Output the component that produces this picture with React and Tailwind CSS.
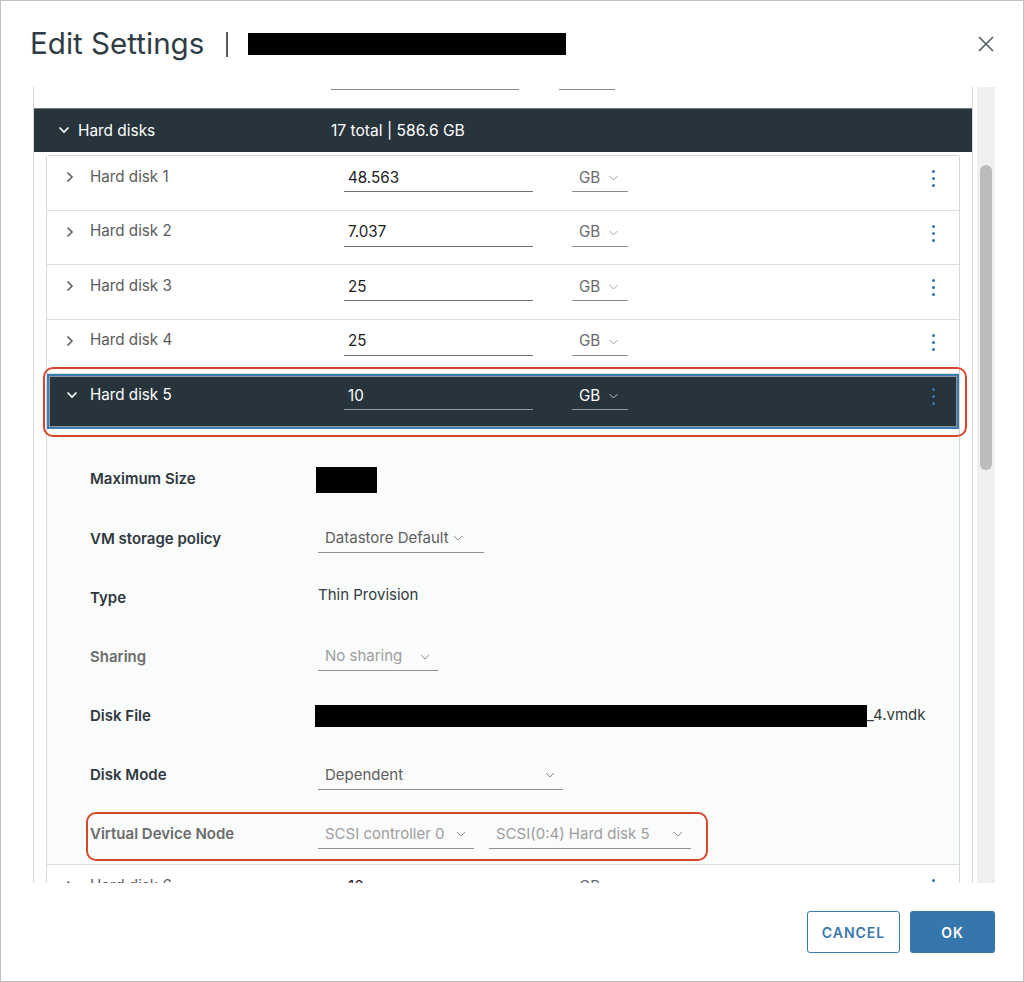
import React from 'react';

const ChevronRight = ({ className }) => (
  <svg viewBox="0 0 8 12" className={className} fill="none" stroke="currentColor" strokeWidth="1.6">
    <path d="M1.5 1.5l4.5 4.5-4.5 4.5" />
  </svg>
);

const ChevronDown = ({ className }) => (
  <svg viewBox="0 0 12 8" className={className} fill="none" stroke="currentColor" strokeWidth="1.6">
    <path d="M1.5 1.5l4.5 4.5 4.5-4.5" />
  </svg>
);

const Caret = ({ className }) => (
  <svg viewBox="0 0 10 6" className={className} fill="none" stroke="currentColor" strokeWidth="1">
    <path d="M1 1l4 4 4-4" />
  </svg>
);

const Kebab = ({ className }) => (
  <div className={`flex flex-col gap-[4px] ${className}`}>
    <span className="h-[3px] w-[3px] rounded-full bg-current" />
    <span className="h-[3px] w-[3px] rounded-full bg-current" />
    <span className="h-[3px] w-[3px] rounded-full bg-current" />
  </div>
);

const disks = [
  { name: 'Hard disk 1', size: '48.563' },
  { name: 'Hard disk 2', size: '7.037' },
  { name: 'Hard disk 3', size: '25' },
  { name: 'Hard disk 4', size: '25' },
];

function DiskRow({ name, size }) {
  return (
    <div className="flex h-[54.5px] shrink-0 items-start border-b border-[#d9dee1] bg-white pt-[9px]">
      <div className="flex h-[24px] w-[297px] items-center pl-[19px]">
        <ChevronRight className="h-[12px] w-[8px] text-[#5e5e5e]" />
        <span className="ml-[16px] text-[15.2px] text-[#5c5c5c]">{name}</span>
      </div>
      <div className="flex h-[27px] w-[189px] items-center border-b border-[#6f6f6f] pl-[4px] text-[15.2px] text-[#1d1d1d]">
        {size}
      </div>
      <div className="ml-[39px] flex h-[27px] w-[56px] items-center border-b border-[#8a8a8a] pl-[7px] text-[15.2px] text-[#6a6a6a]">
        GB
        <Caret className="ml-[8px] h-[6px] w-[11px] text-[#a8a8a8]" />
      </div>
      <div className="ml-auto mr-[24px] flex h-[27px] items-center">
        <Kebab className="text-[#2f72ad]" />
      </div>
    </div>
  );
}

function Select({ text, width, disabled, tight }) {
  return (
    <div
      className={`flex h-[28px] items-center border-b border-[#8f8f8f] pl-[7px] pr-[8px] text-[15px] ${
        disabled ? 'text-[#9e9e9e]' : 'text-[#5e5e5e]'
      } ${tight ? '' : 'justify-between'}`}
      style={{ width }}
    >
      <span>{text}</span>
      <Caret className={`${tight ? 'ml-[4px]' : ''} h-[6px] w-[10px] text-[#8c8c8c]`} />
    </div>
  );
}

function DetailRow({ label, muted, children }) {
  return (
    <div className="flex h-[59.2px] items-center">
      <div
        className={`w-[271px] pl-[43px] text-[15px] font-semibold ${
          muted ? 'text-[#6c6c6c]' : 'text-[#2f383e]'
        }`}
      >
        {label}
      </div>
      <div className="flex items-center">{children}</div>
    </div>
  );
}

export default function App() {
  return (
    <div className="relative flex h-[982px] w-full flex-col overflow-hidden border border-[#bfbfbf] bg-white font-[Inter,'Noto_Sans',sans-serif]">
      {/* Header */}
      <div className="flex h-[86px] shrink-0 items-center pl-[29px] pr-[29px]">
        <h1 className="text-[29.6px] leading-none text-[#2f3c44]">Edit Settings</h1>
        <div className="ml-[22px] h-[25px] w-[1.5px] bg-[#5a5a5a]" />
        <div className="ml-[20px] h-[22px] w-[318px] bg-black" />
        <svg viewBox="0 0 16 16" className="ml-auto h-[16px] w-[16px] text-[#4f5b62]" fill="none" stroke="currentColor" strokeWidth="1.6">
          <path d="M1 1l14 14M15 1L1 15" />
        </svg>
      </div>

      {/* Scrollable body */}
      <div className="flex h-[796px] shrink-0">
        <div className="relative ml-[32px] h-full w-[940px] overflow-hidden border-x border-[#d6dadd]">
          {/* tail of previous section */}
          <div className="relative h-[21px]">
            <div className="absolute left-[297px] top-[2px] h-px w-[188px] bg-[#8a8a8a]" />
            <div className="absolute left-[525px] top-[2px] h-px w-[56px] bg-[#8a8a8a]" />
          </div>

          {/* Hard disks header */}
          <div className="flex h-[44px] items-center border-t border-[#6e7c84] bg-[#27343c] text-white">
            <div className="flex w-[297px] items-center pl-[24px]">
              <ChevronDown className="h-[8px] w-[12px]" />
              <span className="ml-[8px] text-[15.4px]">Hard disks</span>
            </div>
            <span className="text-[15.6px]">17 total | 586.6 GB</span>
          </div>

          {/* Disk list */}
          <div className="ml-[12px] mr-[12px] mt-[3px] rounded-t-[3px] border-x border-t border-[#d3d9dc]">
            {disks.map((d) => (
              <DiskRow key={d.name} {...d} />
            ))}

            {/* Selected disk */}
            <div className="flex h-[55px] items-start bg-[#27343c] pt-[9px] shadow-[inset_0_0_0_2px_#3c7cb0,inset_0_0_0_3px_#8d9aa1]">
              <div className="flex h-[24px] w-[297px] items-center pl-[19px]">
                <ChevronDown className="h-[8px] w-[12px] text-white" />
                <span className="ml-[12px] text-[15.2px] text-white">Hard disk 5</span>
              </div>
              <div className="flex h-[27px] w-[189px] items-center border-b border-[#8e999f] pl-[4px] text-[15.2px] text-white">
                10
              </div>
              <div className="ml-[39px] flex h-[27px] w-[56px] items-center border-b border-[#8e999f] pl-[7px] text-[15.2px] text-white">
                GB
                <Caret className="ml-[8px] h-[6px] w-[11px] text-[#b9c1c5]" />
              </div>
              <div className="ml-auto mr-[24px] flex h-[27px] items-center">
                <Kebab className="text-[#2f78b6]" />
              </div>
            </div>

            {/* Details */}
            <div className="bg-[#fafbfb] pt-[21px]">
              <DetailRow label="Maximum Size">
                <div className="-ml-[2px] h-[26px] w-[61px] bg-black" />
              </DetailRow>
              <DetailRow label="VM storage policy">
                <Select text="Datastore Default" width={166} tight />
              </DetailRow>
              <DetailRow label="Type">
                <span className="-mt-[5px] text-[15px] text-[#333b40]">Thin Provision</span>
              </DetailRow>
              <DetailRow label="Sharing" muted>
                <Select text="No sharing" width={120} disabled />
              </DetailRow>
              <DetailRow label="Disk File">
                <div className="-ml-[3px] h-[22px] w-[552px] bg-black" />
                <span className="-mt-[2px] text-[15px] text-[#333b40]">_4.vmdk</span>
              </DetailRow>
              <DetailRow label="Disk Mode">
                <Select text="Dependent" width={245} />
              </DetailRow>
              <DetailRow label="Virtual Device Node" muted>
                <Select text="SCSI controller 0" width={156} disabled />
                <div className="w-[15px]" />
                <Select text="SCSI(0:4) Hard disk 5" width={202} disabled />
              </DetailRow>
            </div>

            <div className="border-t border-[#d9dee1]">
              <DiskRow name="Hard disk 6" size="10" />
            </div>
          </div>

          {/* annotation highlights */}
          <div className="pointer-events-none absolute left-[9px] top-[280px] h-[70px] w-[924px] rounded-[10px] border-2 border-[#d8462a]" />
          <div className="pointer-events-none absolute left-[52px] top-[725px] h-[49px] w-[622px] rounded-[10px] border-2 border-[#d8462a]" />
        </div>

        {/* Scrollbar */}
        <div className="ml-[4px] h-full w-[18px] bg-[#efefef] pt-[78px]">
          <div className="mx-auto h-[305px] w-[12px] rounded-full bg-[#bcbcbc]" />
        </div>
      </div>

      {/* Footer */}
      <div className="flex flex-1 items-start justify-end gap-[10px] pr-[28px] pt-[28px]">
        <button className="h-[42px] w-[93px] rounded-[3px] border border-[#3a7cb1] bg-white text-[14px] font-semibold tracking-[1px] text-[#3a78ad]">
          CANCEL
        </button>
        <button className="h-[42px] w-[85px] rounded-[3px] bg-[#3577ac] text-[14px] font-semibold tracking-[1px] text-white">
          OK
        </button>
      </div>
    </div>
  );
}
